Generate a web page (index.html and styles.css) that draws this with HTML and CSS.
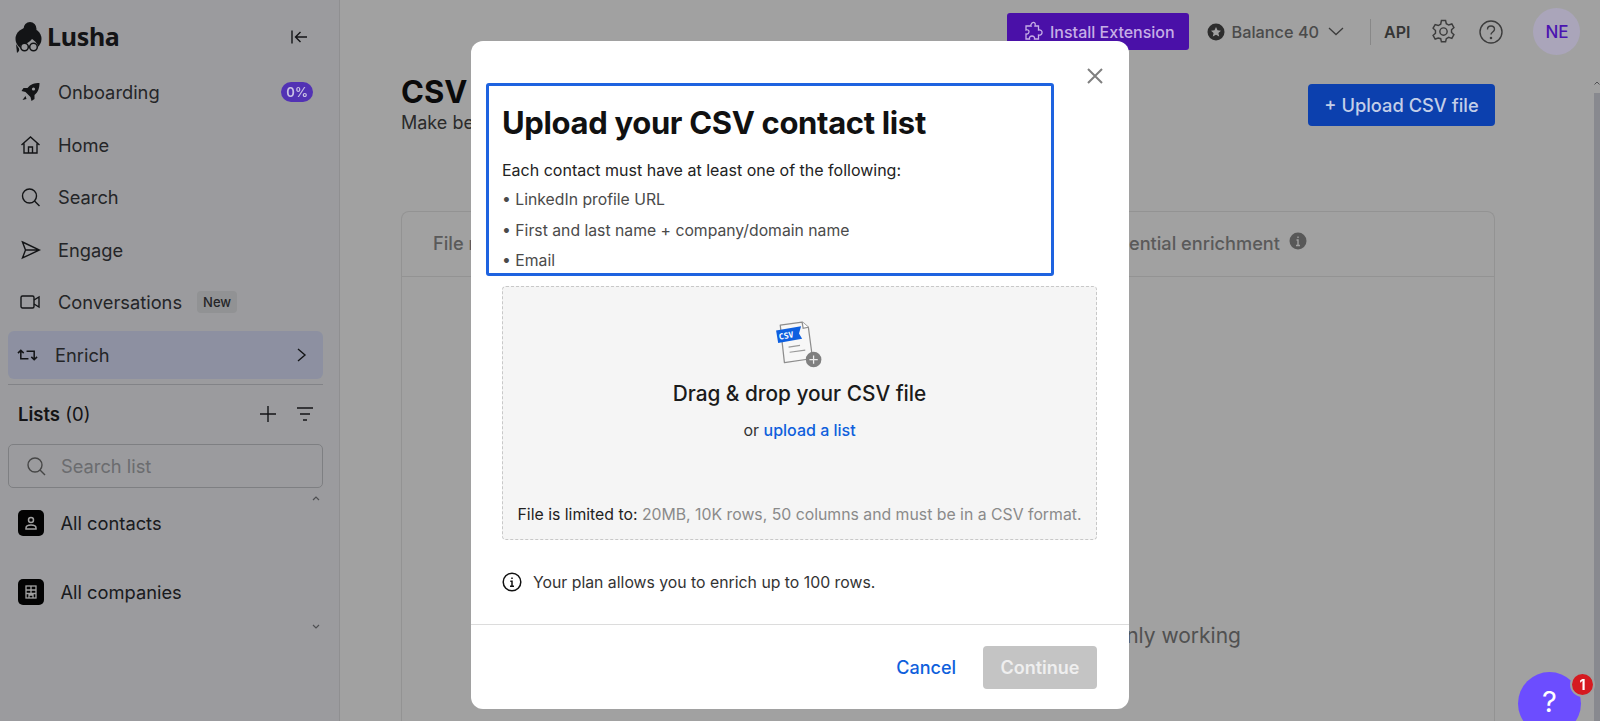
FILE: index.html
```html
<!DOCTYPE html>
<html lang="en">
  <head>
    <meta charset="UTF-8" />
    <title>Lusha - CSV upload</title>
    <link rel="stylesheet" href="styles.css">
  </head>
  <body>
    <div class="app">
      <aside class="sidebar">
        <div class="brand">
          <div class="logo">
            <svg width="27" height="31" viewBox="0 0 27 31">
              <ellipse cx="15" cy="7" rx="6.500" ry="7" fill="#1f2024"/>
              <ellipse cx="13.500" cy="17" rx="13" ry="11.500" fill="#1f2024"/>
              <path d="M1 22l1 9 3-3z" fill="#1f2024"/>
              <path d="M4 31c0-5 1-8 3-9 4 0 8-2 10-5 3 2 6 5 6 8l-1 6z" fill="#f5f6fa"/>
              <circle cx="9.500" cy="25" r="3.800" fill="none" stroke="#1f2024" stroke-width="1.500"/>
              <circle cx="18.500" cy="25" r="3.800" fill="none" stroke="#1f2024" stroke-width="1.500"/>
              <path d="M13 24.500h2" stroke="#1f2024" stroke-width="1.500"/>
            </svg>
            <span class="logo-name">Lusha</span>
          </div>
          <svg class="collapse" width="20" height="20" viewBox="0 0 20 20" fill="none" stroke="#1f2024" stroke-width="1.400"><path d="M3 3.500v13M18 10H7M11.500 5L6.500 10l5 5"/></svg>
        </div>

        <nav class="menu">
          <a class="menu-item">
            <svg width="20" height="20" viewBox="0 0 20 20"><path fill="#1f2024" d="M19 1c-5 0-9 1-12 5H3L1 9l4 1 5 5 1 4 3-2v-4c4-3 5-8 5-12zM5 14l-3 4 4-1z"/><circle cx="13" cy="7" r="1.600" fill="#f5f6fa"/></svg>
            <span>Onboarding</span>
            <span class="pct">0%</span>
          </a>
          <a class="menu-item">
            <svg width="20" height="20" viewBox="0 0 20 20" fill="none" stroke="#1f2024" stroke-width="1.400"><path d="M1 10l9-8 9 8M3.500 8.500V18h13V8.500M8 18v-6h4v6"/></svg>
            <span>Home</span>
          </a>
          <a class="menu-item">
            <svg width="20" height="20" viewBox="0 0 20 20" fill="none" stroke="#1f2024" stroke-width="1.400"><circle cx="9" cy="9" r="7"/><path d="M14 14l5 5"/></svg>
            <span>Search</span>
          </a>
          <a class="menu-item">
            <svg width="20" height="20" viewBox="0 0 20 20" fill="none" stroke="#1f2024" stroke-width="1.400"><path d="M2 2l17 8-17 8 3-8zM5 10h14"/></svg>
            <span>Engage</span>
          </a>
          <a class="menu-item">
            <svg width="21" height="20" viewBox="0 0 21 20" fill="none" stroke="#1f2024" stroke-width="1.400"><rect x="1" y="4" width="13" height="12" rx="1.500"/><path d="M14 8l5-3v10l-5-3"/></svg>
            <span>Conversations</span>
            <span class="new">New</span>
          </a>
          <a class="menu-item active">
            <svg width="22" height="20" viewBox="0 0 22 20" fill="none" stroke="#1f2024" stroke-width="1.600"><path d="M1 8l3-3 3 3M4 5v9h8M21 12l-3 3-3-3M18 15V6h-8"/></svg>
            <span>Enrich</span>
            <svg class="chev" width="12" height="16" viewBox="0 0 12 16" fill="none" stroke="#1f2024" stroke-width="1.400"><path d="M2 2l7 6-7 6"/></svg>
          </a>
        </nav>

        <div class="lists-head">
          <div class="lists-title"><b>Lists</b> (0)</div>
          <div class="lists-actions">
            <svg width="16" height="16" viewBox="0 0 16 16" stroke="#1f2024" stroke-width="1.400"><path d="M8 0v16M0 8h16"/></svg>
            <svg width="16" height="14" viewBox="0 0 16 14" stroke="#1f2024" stroke-width="1.400"><path d="M0 1h16M3 7h10M6 13h4"/></svg>
          </div>
        </div>
        <div class="list-search">
          <svg width="20" height="20" viewBox="0 0 20 20" fill="none" stroke="#707070" stroke-width="1.400"><circle cx="9" cy="9" r="7"/><path d="M14 14l5 5"/></svg>
          <span>Search list</span>
        </div>
        <div class="list-rows">
          <div class="list-row">
            <span class="list-icon">
              <svg width="14" height="14" viewBox="0 0 14 14" fill="none" stroke="#fff" stroke-width="1.500"><circle cx="7" cy="4" r="2.500"/><path d="M2 13v-1c0-2 2-3 5-3s5 1 5 3v1z"/></svg>
            </span>
            All contacts
          </div>
          <div class="list-row">
            <span class="list-icon">
              <svg width="12" height="14" viewBox="0 0 12 14" fill="none" stroke="#fff" stroke-width="1.300"><rect x="1" y="1" width="10" height="12"/><path d="M1 5h10M1 8.500h10M6 1v7.500M4 13v-3h4v3"/></svg>
            </span>
            All companies
          </div>
          <svg class="arrow arrow-up" width="8" height="5" viewBox="0 0 8 5" fill="none" stroke="#7d7e83" stroke-width="1.200"><path d="M1 4l3-3 3 3"/></svg>
          <svg class="arrow arrow-down" width="8" height="5" viewBox="0 0 8 5" fill="none" stroke="#7d7e83" stroke-width="1.200"><path d="M1 1l3 3 3-3"/></svg>
        </div>
      </aside>

      <main class="main">
        <header class="topbar">
          <button class="install">
            <svg width="20" height="22" viewBox="0 0 18 22" fill="none" stroke="#c6aee6" stroke-width="1.300"><path d="M7 2c2-1.500 4 0 3 3h3.500v4c2-.5 4 1 3.500 3s-2 2.500-3.500 2v4h-4c.5-2-1-3-2.500-3s-3 1-2.500 3H1v-5c2 .5 3-1 3-2.500S2.500 8.500 1 9V5h5c-.5-1 0-2 1-3z"/></svg>
            Install Extension
          </button>
          <div class="balance">
            <svg width="18" height="18" viewBox="0 0 18 18"><circle cx="9" cy="9" r="8.500" fill="#484848"/><path fill="#fff" d="M9 4l1.500 3.300 3.500.4-2.600 2.300.8 3.500L9 11.700l-3.200 1.800.8-3.500L4 7.700l3.500-.4z"/></svg>
            <span>Balance 40</span>
            <svg width="16" height="9" viewBox="0 0 16 9" fill="none" stroke="#606060" stroke-width="1.300"><path d="M1 1l7 6.500L15 1"/></svg>
          </div>
          <span class="divider"></span>
          <span class="api">API</span>
          <svg class="gear" width="25" height="25" viewBox="0 0 24 24" fill="none" stroke="#606060" stroke-width="1.400"><circle cx="12" cy="12" r="3.500"/><path d="M10 1.500h4l.7 3 2.300 1.300 3-1 2 3.500-2.300 2.100v2.600l2.300 2.100-2 3.500-3-1-2.300 1.300-.7 3h-4l-.7-3L7 18.200l-3 1-2-3.500 2.300-2.100V11L2 8.800l2-3.500 3 1 2.300-1.300z"/></svg>
          <svg class="help" width="24" height="24" viewBox="0 0 24 24" fill="none" stroke="#606060" stroke-width="1.400"><circle cx="12" cy="12" r="11"/><path d="M8.500 9.500c0-2 1.500-3.500 3.500-3.500s3.500 1.500 3.500 3.300c0 2.700-3.500 2.700-3.500 5.200"/><circle cx="12" cy="18" r=".6"/></svg>
          <div class="avatar">NE</div>
        </header>

        <div class="page-head">
          <div>
            <h1>CSV</h1>
            <p>Make be</p>
          </div>
          <button class="upload">+ Upload CSV file</button>
        </div>

        <section class="card">
          <div class="card-tabs">
            <span>File n</span>
            <span class="tab-right">ential enrichment
              <svg width="18" height="18" viewBox="0 0 18 18"><circle cx="9" cy="9" r="8.500" fill="#8c8c8c"/><path d="M9 4.500v1.500M7.500 8H9v5.500M7 13.500h4" stroke="#fff" stroke-width="1.400" fill="none"/></svg>
            </span>
          </div>
          <div class="card-body">nly working</div>
        </section>
        <svg class="scroll-arrow" width="6" height="4" viewBox="0 0 6 4" fill="none" stroke="#7d7e83" stroke-width="1"><path d="M0.500 3.500L3 1l2.500 2.500"/></svg>
        <div class="scrollbar"></div>
      </main>
    </div>

    <div class="overlay"></div>

    <div class="chat-layer">
      <div class="chat">
        <span class="chat-q">?</span>
        <span class="chat-badge">1</span>
      </div>
    </div>

    <div class="modal">
      <svg class="close" width="16" height="16" viewBox="0 0 16 16" stroke="#7f7f7f" stroke-width="2"><path d="M1 1l14 14M15 1L1 15"/></svg>
      <div class="intro">
        <h2>Upload your CSV contact list</h2>
        <p class="intro-lead">Each contact must have at least one of the following:</p>
        <p>• LinkedIn profile URL</p>
        <p>• First and last name + company/domain name</p>
        <p>• Email</p>
      </div>
      <div class="modal-body">
        <div class="dropzone">
          <svg class="csv-icon" width="50" height="50" viewBox="0 0 48 48">
            <path d="M6 4l21-3 6 5 4 30-27 4z" fill="#f7f7f7" stroke="#8d8d8d" stroke-width="1.200" stroke-linejoin="round"/>
            <path d="M27 1l1 6 5-1" fill="#fff" stroke="#8d8d8d" stroke-width="1.200"/>
            <path d="M2 9l24-4-2 7 3 5-23 4z" fill="#0d5fe0"/>
            <text x="5" y="18" class="csv-text" transform="rotate(-10 5 18)">CSV</text>
            <path d="M14 25l11-1.500M15 30l15-2" stroke="#9a9a9a" stroke-width="1.200"/>
            <circle cx="38" cy="37" r="7.500" fill="#808080"/>
            <path d="M34 37h8M38 33v8" stroke="#eee" stroke-width="1.200"/>
          </svg>
          <div class="drop-title">Drag &amp; drop your CSV file</div>
          <div class="drop-sub">or <a>upload a list</a></div>
          <div class="drop-limit"><span>File is limited to:</span> 20MB, 10K rows, 50 columns and must be in a CSV format.</div>
        </div>
        <div class="plan-note">
          <svg width="20" height="20" viewBox="0 0 20 20" fill="none" stroke="#111" stroke-width="1.500"><circle cx="10" cy="10" r="8.800"/><path d="M10 5.500v1.500M8.300 9.200H10v5M8 14.200h4"/></svg>
          Your plan allows you to enrich up to 100 rows.
        </div>
      </div>
      <div class="modal-foot">
        <a class="cancel">Cancel</a>
        <button class="continue">Continue</button>
      </div>
    </div>
  </body>
</html>
```

FILE: styles.css
```css
* {
  margin: 0;
  padding: 0;
  box-sizing: border-box;
}
html,
body {
  height: 100%;
  overflow: hidden;
}
body {
  font-family: Inter, "Liberation Sans", sans-serif;
  color: #1f2024;
  background: #fff;
}
button {
  font-family: inherit;
  border: none;
}
.app {
  display: flex;
  height: 721px;
  overflow: hidden;
}

/* sidebar */
.sidebar {
  position: relative;
  width: 340px;
  flex-shrink: 0;
  padding: 8px 16px 0 8px;
  background: #f5f6fa;
  border-right: 1px solid #e2e2e6;
}
.brand {
  display: flex;
  align-items: center;
  justify-content: space-between;
  height: 58px;
  padding: 0 0 0 7px;
}
.logo {
  display: flex;
  align-items: center;
  gap: 5px;
  margin-top: 1px;
}
.logo-name {
  margin-top: -3px;
  font-family: "Noto Sans", sans-serif;
  font-size: 25px;
  font-weight: 700;
  letter-spacing: -0.3px;
}
.collapse {
  margin-right: 14px;
}
.menu {
  display: flex;
  flex-direction: column;
  padding-bottom: 5px;
  border-bottom: 1px solid #cfd0d6;
}
.menu-item {
  display: flex;
  align-items: center;
  height: 52.500px;
  padding: 0 12px;
  font-size: 18.300px;
  gap: 17px;
  color: #3a3b40;
}
.menu-item svg {
  flex-shrink: 0;
  width: 21px;
}
.menu-item.active {
  height: 48px;
  margin-top: 2px;
  padding: 0 15px 0 9px;
  gap: 17px;
  background: #dfe5ff;
  border-radius: 6px;
}
.menu-item .chev {
  width: 12px;
  margin-left: auto;
}
.pct {
  position: relative;
  z-index: 2;
  margin-left: auto;
  margin-right: -2px;
  padding: 2px 5px;
  font-size: 13px;
  font-weight: 600;
  color: #c8c0e4;
  background: #5232b4;
  border-radius: 10px;
}
.new {
  margin-left: -2px;
  padding: 3px 6px;
  font-size: 13px;
  font-weight: 500;
  background: #e6e7ea;
  border-radius: 4px;
}
.lists-head {
  display: flex;
  align-items: center;
  justify-content: space-between;
  height: 59.500px;
  padding: 0 10px 0 10px;
}
.lists-title {
  font-size: 18.500px;
}
.lists-title b {
  font-weight: 600;
}
.lists-actions {
  display: flex;
  align-items: center;
  gap: 21px;
}
.list-search {
  display: flex;
  align-items: center;
  gap: 15px;
  height: 44px;
  padding: 0 16px 0 17px;
  font-size: 18.300px;
  color: #aaabb0;
  border: 1px solid #c8c9ce;
  border-radius: 5px;
}
.list-rows {
  position: relative;
  display: flex;
  flex-direction: column;
  gap: 43px;
  padding: 22px 0 0 10px;
}
.list-row {
  display: flex;
  align-items: center;
  gap: 16.500px;
  height: 26px;
  font-size: 18.300px;
  color: #2a2b30;
}
.list-icon {
  display: flex;
  align-items: center;
  justify-content: center;
  width: 26px;
  height: 26px;
  background: #060606;
  border-radius: 5px;
}
.arrow {
  position: absolute;
  right: 3px;
}
.arrow-up {
  top: 8px;
}
.arrow-down {
  top: 136px;
}

/* main */
.main {
  position: relative;
  flex: 1;
  background: #fff;
}
.topbar {
  display: flex;
  align-items: center;
  height: 63px;
  padding-left: 667px;
}
.install {
  position: relative;
  z-index: 2;
  display: flex;
  align-items: center;
  gap: 6px;
  width: 182px;
  height: 37px;
  padding-left: 17px;
  margin-right: 18px;
  font-size: 16px;
  font-weight: 500;
  color: #c6aee6;
  background: #4a10a8;
  border-radius: 3px;
}
.balance {
  display: flex;
  align-items: center;
  gap: 6.500px;
  font-size: 16.300px;
  font-weight: 500;
  color: #777;
}
.balance span {
  margin-right: 2.500px;
}
.divider {
  width: 1px;
  height: 26px;
  margin: 0 13px 0 26px;
  background: #d8d8d8;
}
.api {
  font-size: 16px;
  font-weight: 600;
  color: #555;
  margin-right: 21px;
}
.help {
  margin-left: 23px;
}
.avatar {
  position: relative;
  z-index: 2;
  display: flex;
  align-items: center;
  justify-content: center;
  width: 47px;
  height: 47px;
  margin-left: 30px;
  font-size: 17px;
  font-weight: 500;
  color: #4a14b0;
  background: #aaa5ba;
  border-radius: 50%;
}
.page-head {
  display: flex;
  justify-content: space-between;
  align-items: flex-start;
  padding: 9px 105px 0 61px;
  height: 148px;
}
.page-head h1 {
  font-size: 31px;
  font-weight: 700;
  color: #111;
  line-height: 40px;
}
.page-head p {
  font-size: 18px;
  line-height: 22px;
  color: #444;
}
.upload {
  position: relative;
  z-index: 2;
  width: 187px;
  height: 42px;
  margin-top: 12px;
  font-size: 18.300px;
  font-weight: 500;
  color: #c3cee8;
  background: #0c40ae;
  border-radius: 4px;
}
.card {
  width: 1094px;
  height: 510px;
  margin-left: 61px;
  border: 1px solid #e9e9e9;
  border-bottom: none;
  border-radius: 8px 8px 0 0;
}
.card-tabs {
  display: flex;
  justify-content: space-between;
  align-items: center;
  height: 65px;
  padding: 0 187px 2px 31px;
  font-size: 18.200px;
  font-weight: 500;
  color: #8f8f8f;
  border-bottom: 1px solid #e9e9e9;
}
.tab-right {
  display: flex;
  align-items: center;
  gap: 9px;
}
.tab-right svg {
  margin-top: -4px;
}
.card-body {
  padding: 346px 253px 0 0;
  text-align: right;
  font-size: 21px;
  color: #808080;
}
.scroll-arrow {
  position: absolute;
  top: 81px;
  right: 0;
}
.scrollbar {
  position: absolute;
  top: 93px;
  right: 0;
  width: 6px;
  height: 628px;
  background: #d8d9e2;
}

/* modal */
.overlay {
  position: fixed;
  inset: 0;
  z-index: 1;
  background: rgba(0, 0, 0, 0.37);
}
.modal {
  position: fixed;
  top: 41px;
  left: 471px;
  z-index: 3;
  width: 658px;
  height: 668px;
  background: #fff;
  border-radius: 12px;
}
.close {
  position: absolute;
  top: 27px;
  right: 26px;
}
.intro {
  position: absolute;
  top: 42px;
  left: 15px;
  width: 568px;
  height: 193px;
  padding: 17px 13px 0 13px;
  overflow: hidden;
  border: 3px solid #1e63e0;
  border-radius: 3px;
}
.intro h2 {
  font-size: 31px;
  font-weight: 700;
  line-height: 40px;
  letter-spacing: -0.340px;
  color: #111;
  margin-bottom: 17px;
}
.intro p {
  font-size: 15.750px;
  line-height: 20px;
  margin-bottom: 10.500px;
  color: #4a4a4a;
}
.intro .intro-lead {
  margin-bottom: 10px;
  font-size: 16px;
  color: #222;
}
.modal-body {
  padding: 245px 32px 0 31px;
  height: 584px;
  border-bottom: 1px solid #dcdcdc;
}
.dropzone {
  display: flex;
  flex-direction: column;
  align-items: center;
  height: 254px;
  padding-top: 34px;
  background: #f5f5f5;
  border: 1px dashed #c8c8c8;
  border-radius: 4px;
}
.csv-icon {
  margin-left: -2px;
}
.drop-title {
  margin-top: 10px;
  font-size: 20.800px;
  font-weight: 500;
  color: #1b1b1b;
}
.drop-sub {
  margin-top: 14px;
  font-size: 16px;
  color: #333;
}
.drop-sub a {
  color: #0f5fdc;
  font-weight: 500;
}
.drop-limit {
  margin-top: 65px;
  font-size: 15.800px;
  color: #8a8a8a;
}
.drop-limit span {
  color: #222;
}
.plan-note {
  display: flex;
  align-items: center;
  gap: 11px;
  margin-top: 32px;
  font-size: 15.800px;
  color: #333;
}
.modal-foot {
  display: flex;
  align-items: center;
  justify-content: flex-end;
  gap: 27px;
  height: 83px;
  padding: 2px 32px 0 0;
}
.cancel {
  font-size: 18px;
  font-weight: 500;
  color: #0f5fdc;
}
.continue {
  width: 114px;
  height: 43px;
  font-size: 18px;
  font-weight: 600;
  color: #efefef;
  background: #c4c4c4;
  border-radius: 4px;
}
.csv-text {
  font-family: "DejaVu Sans Mono", monospace;
  font-size: 8px;
  font-weight: 700;
  fill: #fff;
}

/* chat bubble sits above the overlay */
.chat-layer {
  position: fixed;
  inset: 0;
  z-index: 3;
  overflow: hidden;
  pointer-events: none;
}
.chat {
  position: absolute;
  left: 1518px;
  top: 672px;
  width: 63px;
  height: 63px;
  display: flex;
  justify-content: center;
  padding-top: 12px;
  background: #6c4dff;
  border-radius: 50%;
}
.chat-q {
  font-size: 29px;
  font-weight: 400;
  color: #fff;
}
.chat-badge {
  position: absolute;
  top: 0;
  right: -14px;
  width: 25px;
  height: 25px;
  font-size: 14px;
  font-weight: 700;
  line-height: 21px;
  text-align: center;
  color: #fff;
  background: #d61a20;
  border: 2px solid #a0a0a0;
  border-radius: 50%;
}
```
